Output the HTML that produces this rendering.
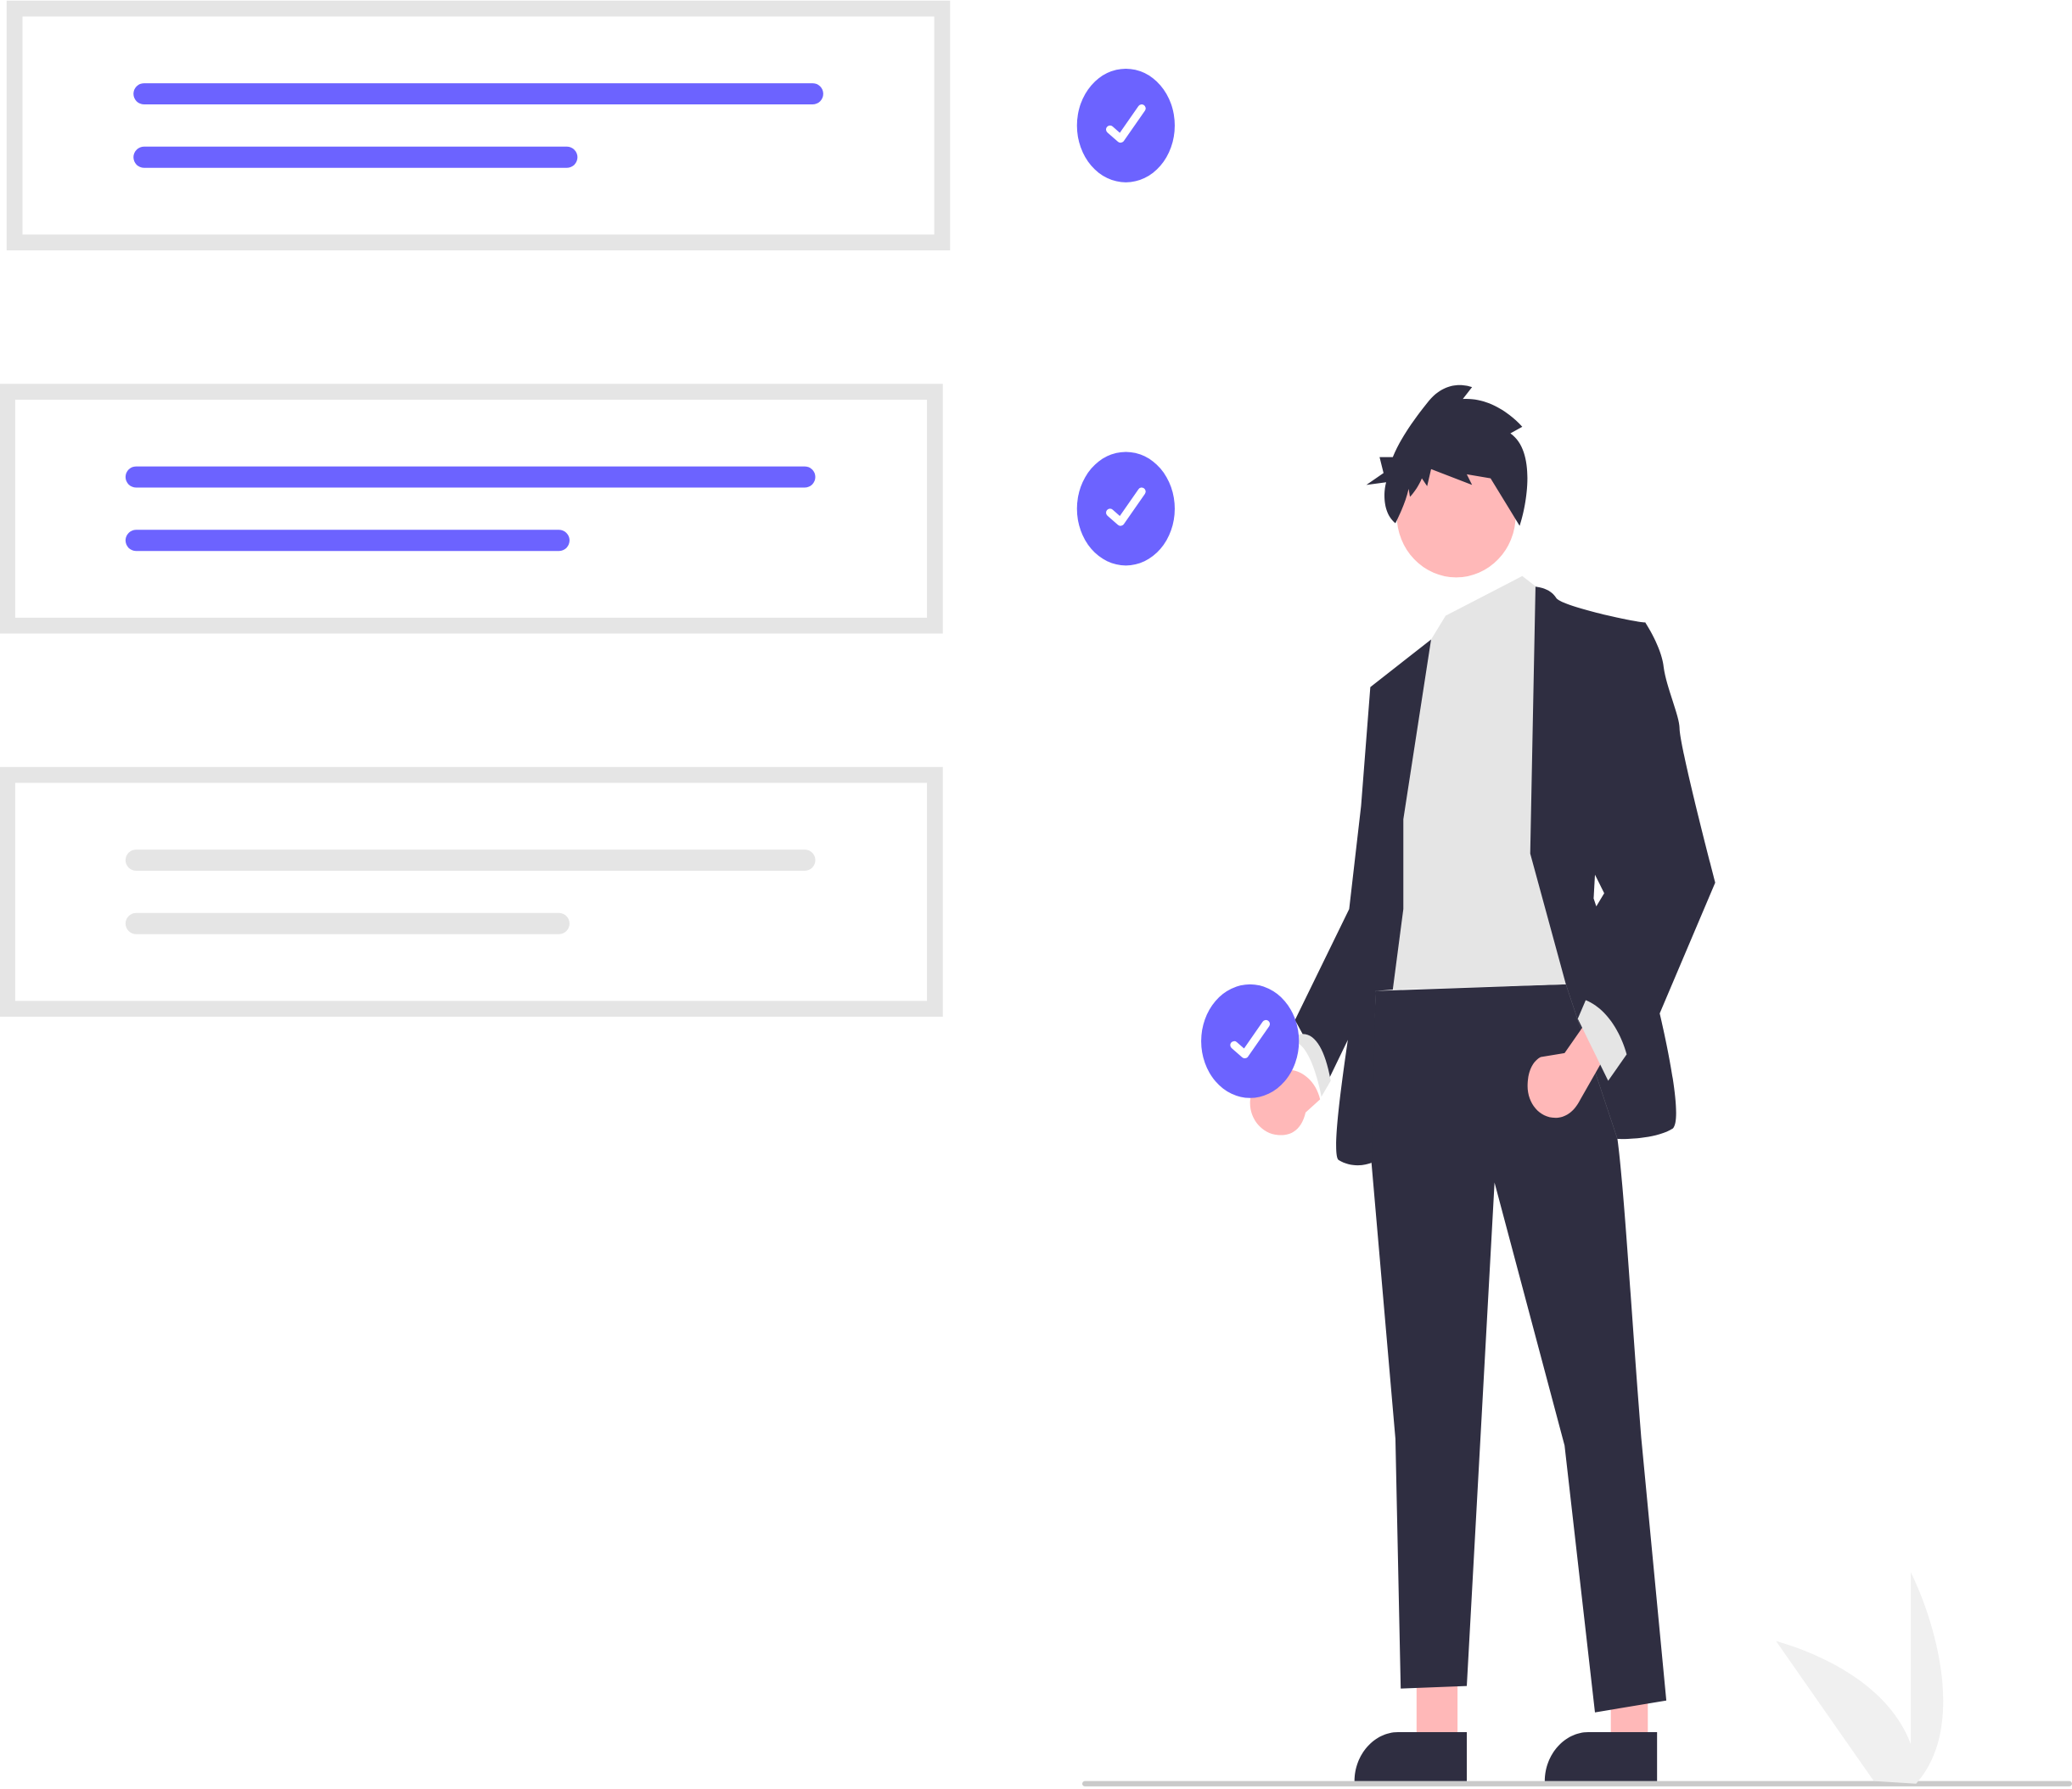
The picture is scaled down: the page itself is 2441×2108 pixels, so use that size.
<!DOCTYPE html>
<html><head><meta charset="utf-8"><style>html,body{margin:0;padding:0;background:#fff;overflow:hidden}svg{display:block}</style></head>
<body>
<svg width="2441" height="2108" viewBox="0 0 1568 1354" preserveAspectRatio="none" xmlns="http://www.w3.org/2000/svg">
<g fill="none" stroke="#e5e5e5" stroke-width="12">
<rect x="11" y="6.5" width="702" height="177"/>
<rect x="5.5" y="296.5" width="702" height="177"/>
<rect x="5.5" y="586.5" width="702" height="177"/>
</g>
<g fill="#6c63ff">
<rect x="101" y="63" width="522" height="16" rx="8"/>
<rect x="101" y="111" width="336" height="16" rx="8"/>
<rect x="95" y="353" width="522" height="16" rx="8"/>
<rect x="95" y="401" width="336" height="16" rx="8"/>
</g>
<g fill="#e5e5e5">
<rect x="95" y="643" width="522" height="16" rx="8"/>
<rect x="95" y="691" width="336" height="16" rx="8"/>
</g>
<rect x="819" y="1348" width="749" height="4" rx="2" fill="#cacaca"/>
<path d="M1418 1348 L1344 1242 C1372 1250 1428 1272 1446 1320 L1446 1190 C1462 1222 1490 1305 1450 1350Z" fill="#f0f0f0"/>
<!-- person -->
<rect x="1072" y="1270" width="31" height="45" fill="#ffb8b8"/>
<rect x="1219" y="1285" width="28" height="30" fill="#ffb8b8"/>
<path d="M1025 1348 C1025 1328 1040 1311 1058 1311 L1110 1311 L1110 1348Z" fill="#2f2e41"/>
<path d="M1169 1348 C1169 1328 1184 1311 1202 1311 L1254 1311 L1254 1348Z" fill="#2f2e41"/>
<path d="M1041 750 L1185 745 L1224 862 C1229 898 1235 1000 1242 1088 L1261 1287 L1207 1296 L1184 1094 L1131 895 L1110 1276 L1060 1278 L1056 1089 L1037 870Z" fill="#2f2e41"/>
<ellipse cx="1102" cy="390" rx="45" ry="47" fill="#ffb8b8"/>
<path d="M1056 396 C1046 388 1047 372 1049 365 L1034 367 L1047 358 L1044 346 L1054 346 C1060 331 1072 315 1080 305 C1093 288 1108 291 1114 293 L1107 302 C1124 301 1140 310 1152 323 L1143 328 C1163 342 1155 383 1150 398 L1128 362 L1110 359 L1114 367 L1083 355 L1080 368 L1076 362 C1074 367 1070 373 1067 376 L1066 370 C1064 379 1060 388 1056 396Z" fill="#2f2e41"/>
<path d="M1094 466 L1152 436 L1165 446 L1158 646 L1185 745 L1054 749 L1062 688 L1062 620 L1083 484Z" fill="#e5e5e5"/>
<path d="M1083 484 L1037 520 L1030 610 L1021 688 L980 772 L1005 818 L1020 787 C1014 828 1008 874 1013 878 C1023 884 1033 882 1038 880 L1041 750 L1054 749 L1062 688 L1062 620Z" fill="#2f2e41"/>
<path d="M1162 444 C1170 445 1175 448 1178 453 C1185 460 1243 472 1245 471 C1252 482 1258 495 1259 505 C1261 520 1271 542 1271 551 C1271 565 1298 668 1298 668 L1256 767 C1256 767 1275 845 1266 854 C1252 863 1224 862 1224 862 L1185 745 L1158 646Z" fill="#2f2e41"/>
<path d="M1207 662 L1214 676 L1208 686 L1206 680Z" fill="#fff"/>
<path d="M983 783 C995 780 1003 795 1007 818 L1000 830 C996 810 990 795 983 790Z" fill="#e5e5e5"/>
<path d="M967 811 C980 806 995 815 999 832 L988 842 C985 855 977 860 967 859 C955 858 946 847 946 835 C946 823 955 813 967 811Z" fill="#ffb8b8"/>
<path d="M1166 800 L1184 797 L1207 764 L1220 790 L1196 832 C1191 842 1184 846 1177 846 C1165 846 1156 835 1156 822 C1156 811 1160 803 1166 800Z" fill="#ffb8b8"/>
<path d="M1200 757 C1215 763 1226 780 1231 798 L1217 818 L1194 771Z" fill="#e5e5e5"/>
<!-- checks -->
<g fill="#6c63ff">
<ellipse cx="852" cy="95" rx="37" ry="43"/>
<ellipse cx="852" cy="385" rx="37" ry="43"/>
<ellipse cx="946" cy="788" rx="37" ry="43"/>
</g>
<g fill="none" stroke="#fff" stroke-width="6" stroke-linecap="round" stroke-linejoin="round">
<path d="M840 98 L848 105 L864 82"/>
<path d="M840 388 L848 395 L864 372"/>
<path d="M934 791 L942 798 L958 775"/>
</g>
</svg>
</body></html>
